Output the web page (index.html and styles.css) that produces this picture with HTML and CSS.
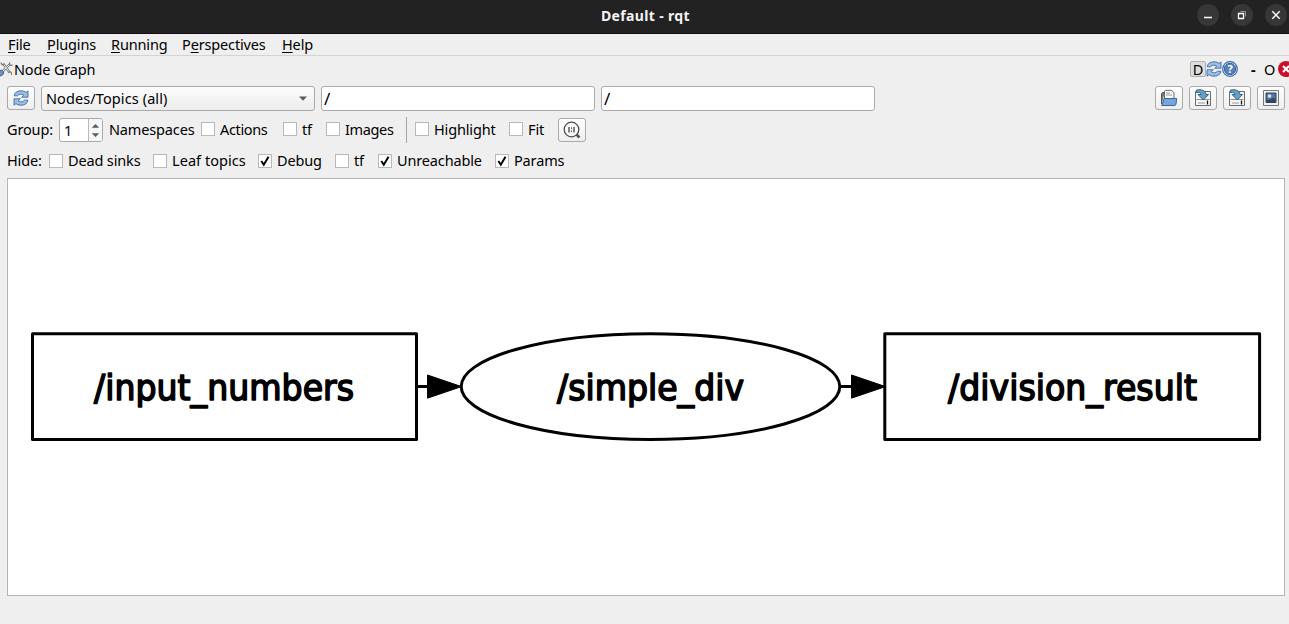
FILE: index.html
```html
<!DOCTYPE html>
<html lang="en">
<head>
<meta charset="utf-8">
<title>Default - rqt</title>
<link rel="stylesheet" href="styles.css">
</head>
<body>
<svg class="defs" width="0" height="0" aria-hidden="true">
  <defs>
    <symbol id="refresh" viewBox="0 0 16 16">
      <path d="M1.200 5.800C1.500 2.300 4.500 .8 8 .8c2.200 0 3.800.6 5 1.700L15 .8v6.400H8.600l2.200-2.100C9 3.800 6 3.700 4.600 5.800z" fill="#9dbde2" stroke="#3b6cab" stroke-width=".9"/>
      <path d="M14.800 10.200c-.3 3.500-3.300 5-6.800 5-2.200 0-3.800-.6-5-1.700L1 15.200V8.800h6.400l-2.200 2.100c1.800 1.300 4.800 1.400 6.200-.7z" fill="#9dbde2" stroke="#3b6cab" stroke-width=".9"/>
    </symbol>
    <symbol id="save" viewBox="0 0 18 18">
      <path d="M1.500 2.500h15v14h-15z" fill="#f5f5f3" stroke="#666b6d"/>
      <path d="M2.500 10.500h13" stroke="#8b8f90"/>
      <path d="M4 14h7" stroke="#c5c8c6" stroke-width="2"/>
      <path d="M13.500 11.500v4" stroke="#111" stroke-width="1.300"/>
      <path d="M2.500 1C7.500 0 11.700 1.500 11.900 5.500h2.600L9.300 11 4 5.500h3.200C7 3.800 5.500 3.200 2.500 3.500z" fill="#6a9fc3" stroke="#225f88" stroke-width=".9"/>
    </symbol>
  </defs>
</svg>
<div class="window">
  <header class="titlebar">
    <h1 class="title">Default - rqt</h1>
    <div class="controls">
      <svg class="control" viewBox="0 0 22 22"><path d="M7 13.500h8" stroke="#fff" stroke-width="1.300"/></svg>
      <svg class="control" viewBox="0 0 22 22"><path d="M7.500 9.500h5v5h-5z" fill="none" stroke="#fff" stroke-width="1.300"/><path d="M9.500 7.500h5v5" fill="none" stroke="#999"/></svg>
      <svg class="control" viewBox="0 0 22 22"><path d="M7.300 7.300l7.400 7.400m0-7.400l-7.400 7.400" stroke="#fff" stroke-width="1.400"/></svg>
    </div>
  </header>
  <nav class="menubar">
    <span><u>F</u>ile</span><span><u>P</u>lugins</span><span><u>R</u>unning</span><span>P<u>e</u>rspectives</span><span><u>H</u>elp</span>
  </nav>
  <div class="dock-title">
    <svg class="tools" viewBox="0 0 14 16">
      <path d="M-2 10.500c3-2 6-1.500 5.500 1.500S0 15-2 15z" fill="#6e91bf" stroke="#31578b"/>
      <path d="M3 10L9.500 3.500M3 2.500l6.500 8.800" stroke="#777" stroke-width="2.400"/>
      <path d="M3 10L9.500 3.500M3 2.500l6.500 8.800" stroke="#eee" stroke-width="1"/>
      <path d="M1 1.500c0 2 2.500 3.500 3.500 1.500M12.500 3.800C10.500 5.200 8.700 3.500 10 1.300M8 11.800c2-2 4-.5 3.500 2" fill="none" stroke="#777" stroke-width="1.200"/>
    </svg>
    <span class="dock-name">Node Graph</span>
    <div class="dock-actions">
      <span class="dock-d">D</span>
      <svg class="i16" viewBox="0 0 16 16"><use href="#refresh"/></svg>
      <svg class="i16" viewBox="0 0 16 16"><circle cx="8" cy="8" r="7.300" fill="#fff" stroke="#3465a4" stroke-width="1.200"/><circle cx="8" cy="8" r="5.700" fill="#5682b9" stroke="#2f609e"/><text x="8" y="12" class="question">?</text></svg>
      <span class="dash">-</span>
      <span class="dock-o">O</span>
      <svg class="i16" viewBox="0 0 16 16"><circle cx="8" cy="8" r="8" fill="#c8102e"/><path d="M5 5l6 6m0-6l-6 6" stroke="#fff" stroke-width="2.200"/></svg>
    </div>
  </div>
  <div class="filters">
    <button class="btn"><svg class="i16" viewBox="0 0 16 16"><use href="#refresh"/></svg></button>
    <div class="combo"><span>Nodes/Topics (all)</span><svg width="8" height="5" viewBox="0 0 8 5"><path d="M0 .5h8L4 4.800z" fill="#5b5b5b"/></svg></div>
    <div class="field">/</div>
    <div class="field">/</div>
    <div class="file-actions">
      <button class="btn"><svg class="i18" viewBox="0 0 18 18"><path d="M1.500 15V4.500l1-1H5" fill="#777" stroke="#555"/><path d="M4.500 12V2l1-.7h6L14 3.800V12z" fill="#f8f8f8" stroke="#666"/><path d="M6 4h4M6 6h6" stroke="#999"/><path d="M2.500 14.500L4 9.500h12.700l-.8 6.200-1 .8H1.700z" fill="#77a5d8" stroke="#3568a4"/></svg></button>
      <button class="btn"><svg class="i18" viewBox="0 0 18 18"><use href="#save"/></svg></button>
      <button class="btn"><svg class="i18" viewBox="0 0 18 18"><use href="#save"/></svg></button>
      <button class="btn"><svg class="i18" viewBox="0 0 18 18"><path d="M1.500 1.500h15v15h-15z" fill="#f2f2f0" stroke="#75787a"/><path d="M4 4h10v9.500H4z" fill="#5577a5" stroke="#2b405c"/><circle cx="7.500" cy="7" r="1.800" fill="#d9e6f2"/><path d="M4.500 13v-2l3.500-.5 3-1.500 2.500 1v3z" fill="#34465b"/></svg></button>
    </div>
  </div>
  <div class="options group-row">
    <span>Group:</span>
    <div class="spin"><span>1</span><svg viewBox="0 0 14 22"><path d="M3 8.500h8L7 4.500zM3 14.500h8L7 18.500z" fill="#5b5b5b"/></svg></div>
    <span>Namespaces</span>
    <i class="box"></i><span class="tight">Actions</span>
    <i class="box"></i><span>tf</span>
    <i class="box"></i><span class="tight">Images</span>
    <i class="divider"></i>
    <i class="box"></i><span>Highlight</span>
    <i class="box"></i><span>Fit</span>
    <button class="btn"><svg class="i18" viewBox="0 0 18 18"><circle cx="8.500" cy="8.500" r="7.300" fill="#fafafa" stroke="#4b4f50" stroke-width="1.300"/><path d="M13.500 13.500l3 3" stroke="#555" stroke-width="2.500"/><path d="M6 6v5.500M11 6v5.500" stroke="#333" stroke-width="1.200"/><path d="M8.500 6.500v1.300M8.500 9.500v1.300" stroke="#333" stroke-width="1.100"/></svg></button>
  </div>
  <div class="options hide-row">
    <span>Hide:</span>
    <i class="box"></i><span>Dead sinks</span>
    <i class="box"></i><span class="loose">Leaf topics</span>
    <i class="box"><svg viewBox="0 0 14 14"><path d="M3.300 7l2.500 3.700 4.700-8" /></svg></i><span>Debug</span>
    <i class="box"></i><span>tf</span>
    <i class="box"><svg viewBox="0 0 14 14"><path d="M3.300 7l2.500 3.700 4.700-8" /></svg></i><span>Unreachable</span>
    <i class="box"><svg viewBox="0 0 14 14"><path d="M3.300 7l2.500 3.700 4.700-8" /></svg></i><span>Params</span>
  </div>
  <main class="graph">
    <svg width="1276" height="416" viewBox="8 179 1276 416">
      <g class="shape">
        <rect x="32.500" y="333.700" width="384" height="105.800"/>
        <ellipse cx="650.500" cy="386.600" rx="189.300" ry="52.900"/>
        <rect x="884.800" y="333.700" width="374.800" height="105.800"/>
        <path d="M417 386.600h11M840 386.600h12"/>
      </g>
      <path class="arrow" d="M427.500 375v23.200l34-11.600zM851.500 375v23.200l34-11.600z"/>
      <g class="label">
        <text x="94" y="399.700" textLength="260" lengthAdjust="spacingAndGlyphs">/input_numbers</text>
        <text x="557" y="399.700" textLength="187" lengthAdjust="spacingAndGlyphs">/simple_div</text>
        <text x="948" y="399.700" textLength="249" lengthAdjust="spacingAndGlyphs">/division_result</text>
      </g>
    </svg>
  </main>
</div>
</body>
</html>
```
FILE: styles.css
```css
* { box-sizing: border-box; }
body { margin: 0; background: #efefef; color: #000; font: 14.500px/20px "Noto Sans", sans-serif; letter-spacing: -.15px; overflow: hidden; }
.defs { display: block; height: 0; }
svg { display: block; flex: none; }
.window { width: 1289px; height: 624px; display: flex; flex-direction: column; background: #efefef; white-space: nowrap; }
.titlebar { height: 34px; background: #222; border-bottom: 1px solid #160d16; display: grid; grid-template-columns: 1fr auto 1fr; padding: 0 2px 0 4px; }
.title { grid-column: 2; margin: 0; padding-top: 6px; font-size: 14px; line-height: 20px; font-weight: 700; color: #f4f4f4; letter-spacing: .35px; }
.controls { display: flex; justify-content: flex-end; gap: 12px; padding-top: 4px; }
.control { width: 22px; height: 22px; border-radius: 50%; background: #373737; }
.menubar { height: 22px; border-bottom: 1px solid #d3d3d3; display: grid; grid-template-columns: 39px 64px 71px 100px 40px; padding-left: 8px; }
.menubar u { text-decoration-thickness: 1px; text-underline-offset: 2px; }
.dock-title { height: 30px; display: flex; align-items: flex-start; padding-top: 3px; }
.tools { width: 14px; height: 16px; margin-top: 2px; }
.dock-actions { margin-left: auto; display: flex; height: 20px; overflow: hidden; width: 99px; }
.dock-d { width: 16px; height: 16px; flex: none; margin-top: 2px; border: 1px solid #b0b0b0; border-radius: 2px; background: #dedede; display: flex; justify-content: center; line-height: 15px; }
.i16 { width: 16px; height: 16px; }
.dock-actions .i16 { margin-top: 2px; }
.i18 { width: 18px; height: 18px; }
.question { font: 700 11px "Noto Sans", sans-serif; fill: #fff; text-anchor: middle; letter-spacing: 0; }
.dash { width: 26px; flex: none; padding-left: 13px; font-weight: 700; }
.dock-o { width: 14px; flex: none; }
.filters { height: 24px; display: grid; grid-template-columns: 28px 274px 274px 274px 1fr; column-gap: 6px; padding: 0 4px 0 7px; }
.btn { width: 28px; height: 24px; padding: 0; display: flex; align-items: center; justify-content: center; border: 1px solid #aaa; border-radius: 3px; background: linear-gradient(#fff, #eee); }
.combo, .field { height: 25px; border: 1px solid #aaa; border-radius: 3px; line-height: 23px; }
.combo { display: flex; align-items: center; justify-content: space-between; padding: 0 7px 0 4px; background: linear-gradient(#fcfcfc, #ededed); letter-spacing: .1px; }
.field { width: 274px; background: #fff; padding-left: 2px; font-size: 17px; line-height: 24px; }
.file-actions { display: flex; justify-content: flex-end; gap: 6px; }
.options { display: grid; align-items: center; padding-left: 7px; }
.options > span { margin-top: -2px; }
.group-row { height: 26px; margin-top: 7px; grid-template-columns: 52px 50px 92px 19px 63px 19px 24px 19px 61px 9px 19px 75px 19px 30px 28px; }
.hide-row { height: 26px; margin-top: 5px; grid-template-columns: 42px 19px 85px 19px 86px 19px 58px 19px 24px 19px 98px 19px 60px; }
.box { width: 14px; height: 14px; border: 1px solid #b9b9b9; background: #fff; display: block; margin-top: -2px; }
.hide-row .box { margin-top: -1px; }
.box svg { width: 14px; height: 14px; margin: -1px; }
.box path { fill: none; stroke: #000; stroke-width: 2; }
.tight { letter-spacing: -.35px; }
.loose { letter-spacing: .05px; }
.spin { width: 44px; height: 24px; border: 1px solid #aaa; border-radius: 3px; display: flex; background: #fff; line-height: 23px; overflow: hidden; }
.spin span { width: 29px; padding-left: 4px; border-right: 1px solid #bbb; }
.spin svg { width: 13px; height: 22px; background: #f5f5f5; }
.divider { width: 1px; height: 26px; background: #a5a5a5; }
.graph { width: 1278px; height: 418px; margin: 4px 0 0 7px; border: 1px solid #b5b5b5; background: #fff; }
.shape { fill: none; stroke: #000; stroke-width: 3; stroke-linejoin: round; }
.arrow { fill: #000; stroke: #000; stroke-width: 1; }
.label { font: 35px "DejaVu Sans", sans-serif; letter-spacing: 0; fill: #000; stroke: #000; stroke-width: 1.600; stroke-linejoin: round; }
```
